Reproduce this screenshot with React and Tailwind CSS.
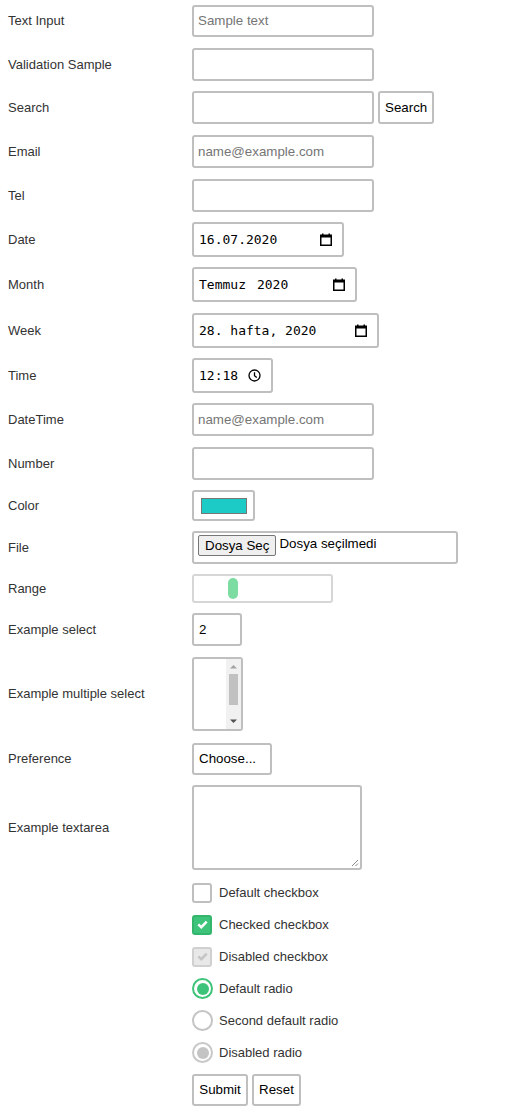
import React from "react";

const F = { fontFamily: '"Liberation Sans", Arial, sans-serif' };
const M = { fontFamily: '"DejaVu Sans Mono", "Liberation Mono", monospace' };

function Cal() {
  return (
    <svg width="12" height="13" viewBox="0 0 12 13" className="shrink-0">
      <rect x="0.75" y="2.25" width="10.5" height="10" fill="none" stroke="#000" strokeWidth="1.5" />
      <rect x="0.75" y="2" width="10.5" height="2.5" fill="#000" />
      <rect x="2" y="0.5" width="1.5" height="2" fill="#000" />
      <rect x="8.5" y="0.5" width="1.5" height="2" fill="#000" />
    </svg>
  );
}

function Clock() {
  return (
    <svg width="13" height="13" viewBox="0 0 13 13" className="shrink-0">
      <circle cx="6.5" cy="6.5" r="5.5" fill="none" stroke="#000" strokeWidth="1.3" />
      <path d="M6.5 3.2 V6.8 L8.8 8.6" fill="none" stroke="#000" strokeWidth="1.3" />
    </svg>
  );
}

function Row({ label, children, className = "" }) {
  return (
    <div className={"flex items-center " + className}>
      <div className="w-[192px] shrink-0 pl-2 text-[13px] text-[#333]">{label}</div>
      {children}
    </div>
  );
}

const box = "border-2 border-[#bfbfbf] rounded-[3px] bg-white";

function TextBox({ w = "w-[182px]", h = "h-[33px]", placeholder }) {
  return (
    <div className={`${box} ${w} ${h} flex items-center px-[4px] text-[13.33px] text-[#757575]`}>
      {placeholder}
    </div>
  );
}

function DateBox({ w, children, icon }) {
  return (
    <div className={`${box} ${w} h-[35px] flex items-center justify-between pl-[5px] pr-[10px] text-[13px] text-black`} style={M}>
      <span className="whitespace-pre">{children}</span>
      {icon}
    </div>
  );
}

const CheckMark = ({ color }) => (
  <svg width="11" height="9" viewBox="0 0 11 9"><path d="M1.3 4.4 L4.3 7.2 L9.7 1.6" fill="none" stroke={color} strokeWidth="2.4" /></svg>
);

function Check({ label, type }) {
  let mark = null;
  if (type === "box") mark = <div className="w-5 h-5 shrink-0 rounded-[3px] border-2 border-[#bfbfbf] bg-white" />;
  if (type === "checked")
    mark = (
      <div className="w-5 h-5 shrink-0 rounded-[3px] bg-[#3ec47a] border-2 border-[#34b56c] flex items-center justify-center">
        <CheckMark color="#fff" />
      </div>
    );
  if (type === "disabled")
    mark = (
      <div className="w-5 h-5 shrink-0 rounded-[3px] bg-[#e8e8e8] border-2 border-[#d0d0d0] flex items-center justify-center">
        <CheckMark color="#c4c4c4" />
      </div>
    );
  if (type === "radio")
    mark = (
      <div className="w-[21px] h-[21px] shrink-0 rounded-full border-2 border-[#3ec47a] flex items-center justify-center">
        <div className="w-[12px] h-[12px] rounded-full bg-[#3ec47a]" />
      </div>
    );
  if (type === "radio2") mark = <div className="w-[21px] h-[21px] shrink-0 rounded-full border-2 border-[#c4c4c4] bg-white" />;
  if (type === "radio3")
    mark = (
      <div className="w-[21px] h-[21px] shrink-0 rounded-full border-2 border-[#c8c8c8] flex items-center justify-center">
        <div className="w-[12px] h-[12px] rounded-full bg-[#c4c4c4]" />
      </div>
    );
  const isRadio = type.startsWith("radio");
  return (
    <div className={`flex items-center h-[21px] pl-[192px] ${isRadio ? "gap-[6px]" : "gap-[7px]"}`}>
      {mark}
      <span className="text-[13px] text-[#333]">{label}</span>
    </div>
  );
}

export default function App() {
  return (
    <div className="bg-white w-[523px] min-h-[1118px] pt-[5px]" style={F}>
      <div className="flex flex-col">
        <Row label="Text Input"><TextBox h="h-[32px]" placeholder="Sample text" /></Row>
        <Row label="Validation Sample" className="mt-[11px]"><TextBox /></Row>
        <Row label="Search" className="mt-[10px]">
          <TextBox />
          <div className={`${box} ml-[4px] h-[33px] px-[5px] flex items-center text-[13.33px] text-black`}>Search</div>
        </Row>
        <Row label="Email" className="mt-[11px]"><TextBox placeholder="name@example.com" /></Row>
        <Row label="Tel" className="mt-[11px]"><TextBox /></Row>
        <Row label="Date" className="mt-[10px]"><DateBox w="w-[152px]" icon={<Cal />}>16.07.2020</DateBox></Row>
        <Row label="Month" className="mt-[10px]">
          <DateBox w="w-[165px]" icon={<Cal />}>Temmuz<span className="inline-block w-[11px]" />2020</DateBox>
        </Row>
        <Row label="Week" className="mt-[11px]"><DateBox w="w-[187px]" icon={<Cal />}>28. hafta, 2020</DateBox></Row>
        <Row label="Time" className="mt-[10px]"><DateBox w="w-[81px]" icon={<Clock />}>12:18</DateBox></Row>
        <Row label="DateTime" className="mt-[10px]"><TextBox placeholder="name@example.com" /></Row>
        <Row label="Number" className="mt-[11px]"><TextBox /></Row>
        <Row label="Color" className="mt-[10px]">
          <div className={`${box} w-[63px] h-[31px] flex items-center justify-center`}>
            <div className="w-[46px] h-[16px] bg-[#1ccbc6] border border-[#777]" />
          </div>
        </Row>
        <Row label="File" className="mt-[10px]">
          <div className={`${box} w-[266px] h-[33px] flex items-start pt-[2px] pl-[4px] gap-[3px] text-[13.33px] text-black`}>
            <div className="h-[21px] px-[6px] flex items-center bg-[#efefef] border border-[#767676] rounded-[2px]">Dosya Seç</div>
            <span className="leading-[18px]">Dosya seçilmedi</span>
          </div>
        </Row>
        <Row label="Range" className="mt-[10px]">
          <div className="border-2 border-[#d6d6d6] rounded-[3px] bg-white w-[141px] h-[29px] flex items-center pl-[34px]">
            <div className="w-[10px] h-[21px] rounded-full bg-[#7ddca2]" />
          </div>
        </Row>
        <Row label="Example select" className="mt-[10px]">
          <div className={`${box} w-[50px] h-[33px] flex items-center px-[5px] text-[13.33px] text-black`}>2</div>
        </Row>
        <Row label="Example multiple select" className="mt-[11px]">
          <div className={`${box} w-[51px] h-[74px] flex justify-end overflow-hidden`}>
            <div className="w-[15px] h-full bg-[#f1f1f1] flex flex-col items-center">
              <svg width="15" height="15" viewBox="0 0 15 15"><path d="M4 9.5 L7.5 6 L11 9.5 Z" fill="#a3a3a3" /></svg>
              <div className="w-[9px] h-[31px] bg-[#c1c1c1]" />
              <div className="flex-1" />
              <svg width="15" height="15" viewBox="0 0 15 15"><path d="M4 5.5 L7.5 9 L11 5.5 Z" fill="#505050" /></svg>
            </div>
          </div>
        </Row>
        <Row label="Preference" className="mt-[12px]">
          <div className={`${box} w-[80px] h-[32px] flex items-center px-[5px] text-[13.33px] text-black`}>Choose...</div>
        </Row>
        <Row label="Example textarea" className="mt-[10px]">
          <div className={`${box} w-[170px] h-[85px] relative`}>
            <svg width="9" height="9" viewBox="0 0 9 9" className="absolute right-[1px] bottom-[1px]">
              <path d="M8 2 L2 8 M8 5.5 L5.5 8" stroke="#8a8a8a" strokeWidth="1" />
            </svg>
          </div>
        </Row>
        <div className="mt-[12px] flex flex-col gap-[11px]">
          <Check label="Default checkbox" type="box" />
          <Check label="Checked checkbox" type="checked" />
          <Check label="Disabled checkbox" type="disabled" />
          <Check label="Default radio" type="radio" />
          <Check label="Second default radio" type="radio2" />
          <Check label="Disabled radio" type="radio3" />
        </div>
        <div className="mt-[11px] pl-[192px] flex gap-[4px]">
          <div className={`${box} h-[32px] w-[56px] flex items-center justify-center text-[13.33px] text-black`}>Submit</div>
          <div className={`${box} h-[32px] w-[49px] flex items-center justify-center text-[13.33px] text-black`}>Reset</div>
        </div>
      </div>
    </div>
  );
}
